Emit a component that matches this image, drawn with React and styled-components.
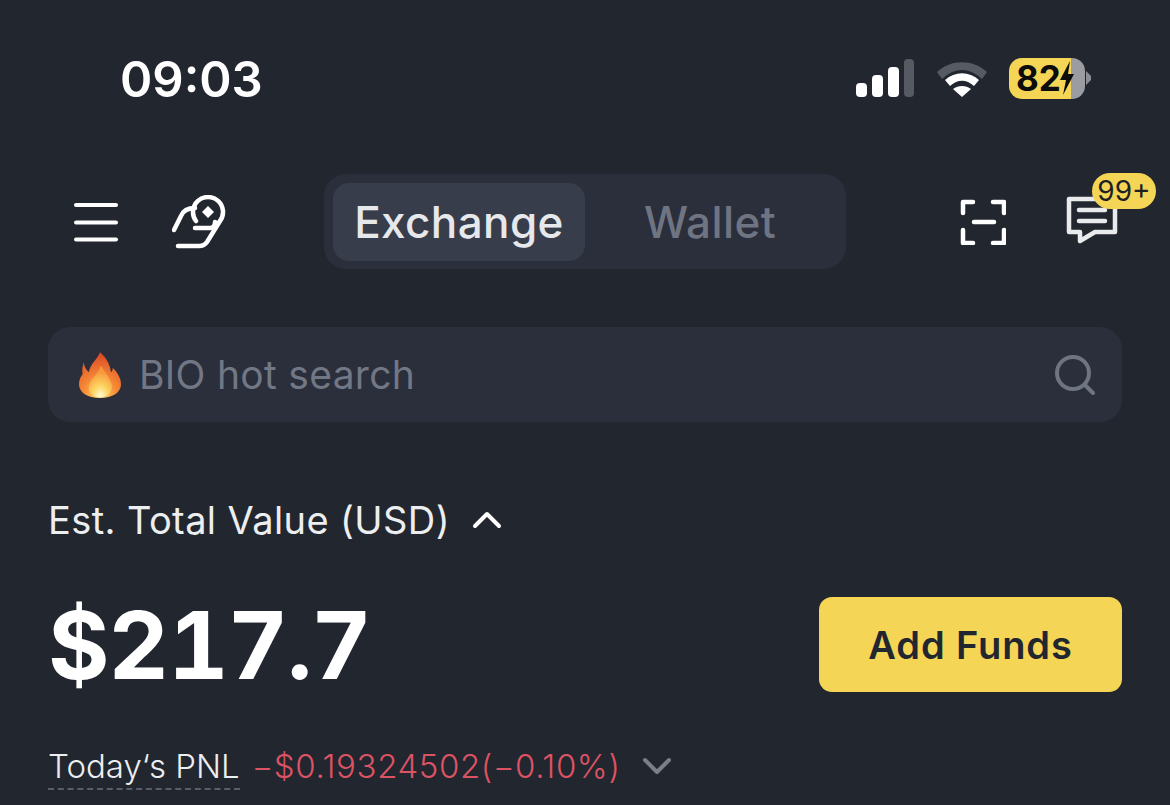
import styled, { createGlobalStyle } from 'styled-components'

const GlobalStyle = createGlobalStyle`
    html, body {
        margin: 0;
        padding: 0;
        background: #22262F;
    }
    * {
        box-sizing: border-box;
    }
`

const Page = styled.div`
    width: 1170px;
    height: 805px;
    overflow: hidden;
    background: #22262F;
    color: #fff;
    font-family: Inter, "Liberation Sans", sans-serif;
    display: flex;
    flex-direction: column;
`

const StatusBar = styled.div`
    height: 174px;
    padding: 50px 79px 64px 120px;
    display: flex;
    align-items: center;
    justify-content: space-between;
`

const Clock = styled.div`
    font-size: 49px;
    font-weight: 600;
    line-height: 60px;
`

const StatusIcons = styled.div`
    margin-top: -4px;
    display: flex;
    align-items: center;
    gap: 22px;
`

const Battery = styled.div`
    height: 41px;
    display: flex;
    align-items: center;
`

const BatteryBody = styled.div`
    width: 76px;
    height: 41px;
    border-radius: 13px;
    background: linear-gradient(90deg, #F5D556 0 81%, #9A9CA2 81% 100%);
    color: #0c0c0c;
    font-size: 35px;
    font-weight: 700;
    line-height: 41px;
    padding-left: 7px;
    display: flex;
    align-items: center;
`

const BatteryCap = styled.div`
    width: 5px;
    height: 14px;
    margin-left: 1px;
    clip-path: polygon(0 0, 100% 35%, 100% 65%, 0 100%);
    background: #8b8d93;
`

const Nav = styled.div`
    height: 95px;
    padding: 0 50px 0 74px;
    display: flex;
    align-items: center;
`

const NavLeft = styled.div`
    width: 250px;
    display: flex;
    align-items: center;
    gap: 52px;
`

const Segmented = styled.div`
    width: 522px;
    height: 95px;
    padding: 9px 8px 8px 9px;
    border-radius: 22px;
    background: #2A2F3B;
    display: flex;
`

const Tab = styled.div`
    width: ${p => (p.$active ? '252px' : '250px')};
    border-radius: 16px;
    background: ${p => (p.$active ? '#373D4A' : 'transparent')};
    color: ${p => (p.$active ? '#E6E8EC' : '#6F7482')};
    font-size: 44px;
    font-weight: 500;
    letter-spacing: 0.4px;
    display: flex;
    align-items: center;
    justify-content: center;
`

const NavRight = styled.div`
    flex: 1;
    padding-left: 114px;
    display: flex;
    align-items: center;
    gap: 60px;
`

const MessageButton = styled.div`
    position: relative;
    width: 54px;
    height: 54px;
`

const CountBadge = styled.div`
    position: absolute;
    left: 26px;
    top: -22px;
    width: 64px;
    height: 36px;
    border-radius: 18px;
    background: #F5D556;
    color: #1d1f25;
    font-size: 28px;
    line-height: 36px;
    text-align: center;
`

const Search = styled.div`
    margin: 58px 48px 0;
    height: 95px;
    padding: 0 26px 0 31px;
    border-radius: 22px;
    background: #2A2F3B;
    display: flex;
    align-items: center;
`

const SearchText = styled.div`
    flex: 1;
    margin-left: 18px;
    color: #727786;
    font-size: 39px;
    letter-spacing: 0.3px;
`

const ValueLabelRow = styled.div`
    margin: 72px 48px 0;
    height: 52px;
    display: flex;
    align-items: center;
    gap: 22px;
    font-size: 38px;
    letter-spacing: 0.4px;
    color: #EDEEF0;
`

const ValueRow = styled.div`
    margin: 51px 48px 0;
    height: 95px;
    display: flex;
    align-items: center;
    justify-content: space-between;
`

const Amount = styled.div`
    font-size: 94px;
    font-weight: 700;
    font-variant-numeric: tabular-nums;
    letter-spacing: -1.200px;
    color: #fff;
`

const AddFunds = styled.div`
    width: 303px;
    height: 95px;
    border-radius: 13px;
    background: #F5D556;
    color: #22262F;
    font-size: 38px;
    font-weight: 600;
    letter-spacing: 0.9px;
    display: flex;
    align-items: center;
    justify-content: center;
`

const PnlRow = styled.div`
    margin: 51px 48px 0;
    height: 46px;
    display: flex;
    align-items: center;
    font-size: 33px;
    font-weight: 300;
`

const PnlLabel = styled.div`
    color: #EDEEF0;
    border-bottom: 2px dashed #5A5E69;
    line-height: 44px;
    margin-top: 2px;
`

const PnlValue = styled.div`
    margin-left: 12px;
    margin-right: 22px;
    letter-spacing: 0.6px;
    color: #DC5364;
`

function CellBars() {
    return (
        <svg width="59" height="38" viewBox="0 0 59 38">
            <rect x="0" y="24" width="11" height="14" rx="4" fill="#fff" />
            <rect x="16" y="16" width="11" height="22" rx="4" fill="#fff" />
            <rect x="32" y="8" width="11" height="30" rx="4" fill="#fff" />
            <rect x="48" y="0" width="10" height="38" rx="4" fill="#565A63" />
        </svg>
    )
}

function Wifi() {
    return (
        <svg width="50" height="38" viewBox="1 0 50 38">
            <path d="M1 13 C15 0 37 0 51 13 L46 20 C33 8 19 8 6 20 Z" fill="#565A63" />
            <path d="M9 21 C19 12 33 12 43 21 L38 27 C30 20 22 20 14 27 Z" fill="#fff" />
            <path d="M17 30 C22 26 30 26 35 30 L26 38 Z" fill="#fff" />
        </svg>
    )
}

function Bolt() {
    return (
        <svg width="14" height="34" viewBox="0 0 14 34" style={{ marginLeft: -1 }}>
            <path d="M10 0 L0 19 H6 L3 34 L14 13 H8 Z" fill="#0c0c0c" />
        </svg>
    )
}

function Menu() {
    return (
        <svg width="46" height="44" viewBox="0 0 46 44" fill="none" stroke="#fff" strokeWidth="4" strokeLinecap="round">
            <path d="M2 5 H42" />
            <path d="M2 22.500 H42" />
            <path d="M2 39.500 H42" />
        </svg>
    )
}

function HandCoin() {
    return (
        <svg width="54" height="54" viewBox="0 0 54 54" fill="none" stroke="#fff" strokeWidth="4.500" strokeLinecap="round" strokeLinejoin="round">
            <path d="M24 26 A15 15 0 1 1 48 26" />
            <path d="M36 11 L42 17 L36 23 L30 17 Z" fill="#fff" stroke="none" />
            <path d="M2 35 L9 21 C11 16 15 13 23 13" />
            <path d="M23 33 H38 C41 33 43 30 43 27" />
            <path d="M6 51 H27 C31 51 33 50 35 47 L48 26" />
        </svg>
    )
}

function Scan() {
    return (
        <svg width="46" height="46" viewBox="0 0 46 46" fill="none" stroke="#fff" strokeWidth="4.500" strokeLinecap="round" strokeLinejoin="round">
            <path d="M13 3 H3 V14" />
            <path d="M33 3 H44 V14" />
            <path d="M3 31 V44 H13" />
            <path d="M44 31 V44 H33" />
            <path d="M14 23 H34" />
        </svg>
    )
}

function Message() {
    return (
        <svg width="54" height="54" viewBox="0 0 54 54" fill="none" stroke="#E9EAEC" strokeWidth="4.500" strokeLinejoin="round" strokeLinecap="round">
            <path d="M3 4 H49 V37 H29 L14 46 V37 H3 Z" />
            <path d="M13 15 H39" />
            <path d="M13 26 H39" />
        </svg>
    )
}

function Flame() {
    return (
        <svg width="42" height="48" viewBox="0 0 46 50">
            <defs>
                <radialGradient id="flame" cx="50%" cy="95%" r="90%">
                    <stop offset="0%" stopColor="#FFD76A" />
                    <stop offset="45%" stopColor="#F58A35" />
                    <stop offset="100%" stopColor="#DD4A28" />
                </radialGradient>
                <radialGradient id="flameCore" cx="50%" cy="95%" r="75%">
                    <stop offset="0%" stopColor="#FFFBD6" />
                    <stop offset="45%" stopColor="#FDD562" />
                    <stop offset="100%" stopColor="#F79A3D" />
                </radialGradient>
            </defs>
            <path
                d="M23 0 C31 7 34 14 35 22 C36 21 37 20 37 17 C43 23 46 29 46 35 C46 44 37 50 23 50 C9 50 0 44 0 35 C0 30 2 27 4 24 C3 20 4 15 5 11 C6 16 8 20 11 22 C11 14 20 8 23 0 Z"
                fill="url(#flame)"
            />
            <path
                d="M24 15 C28 22 33 26 36 36 C37 44 31 50 23 50 C15 50 9 44 11 36 C13 29 21 24 24 15 Z"
                fill="url(#flameCore)"
            />
        </svg>
    )
}

function SearchIcon() {
    return (
        <svg width="42" height="42" viewBox="0 0 42 42" fill="none" stroke="#6F7482" strokeWidth="4" strokeLinecap="round">
            <circle cx="19" cy="19" r="16" />
            <path d="M31 31 L39 39" />
        </svg>
    )
}

function Chevron({ up, color }) {
    return (
        <svg width="30" height="18" viewBox="0 0 30 18" fill="none" stroke={color} strokeWidth="4" strokeLinecap="round" strokeLinejoin="round">
            <path d={up ? 'M3 15 L15 3 L27 15' : 'M3 3 L15 15 L27 3'} />
        </svg>
    )
}

export default function App() {
    return (
        <Page>
            <GlobalStyle />
            <StatusBar>
                <Clock>09:03</Clock>
                <StatusIcons>
                    <CellBars />
                    <Wifi />
                    <Battery>
                        <BatteryBody>82<Bolt /></BatteryBody>
                        <BatteryCap />
                    </Battery>
                </StatusIcons>
            </StatusBar>
            <Nav>
                <NavLeft>
                    <Menu />
                    <HandCoin />
                </NavLeft>
                <Segmented>
                    <Tab $active>Exchange</Tab>
                    <Tab>Wallet</Tab>
                </Segmented>
                <NavRight>
                    <Scan />
                    <MessageButton>
                        <Message />
                        <CountBadge>99+</CountBadge>
                    </MessageButton>
                </NavRight>
            </Nav>
            <Search>
                <Flame />
                <SearchText>BIO hot search</SearchText>
                <SearchIcon />
            </Search>
            <ValueLabelRow>
                Est. Total Value (USD)
                <Chevron up color="#fff" />
            </ValueLabelRow>
            <ValueRow>
                <Amount>$217.7</Amount>
                <AddFunds>Add Funds</AddFunds>
            </ValueRow>
            <PnlRow>
                <PnlLabel>Today‘s PNL</PnlLabel>
                <PnlValue>−$0.19324502(−0.10%)</PnlValue>
                <Chevron color="#7B7F8A" />
            </PnlRow>
        </Page>
    )
}
